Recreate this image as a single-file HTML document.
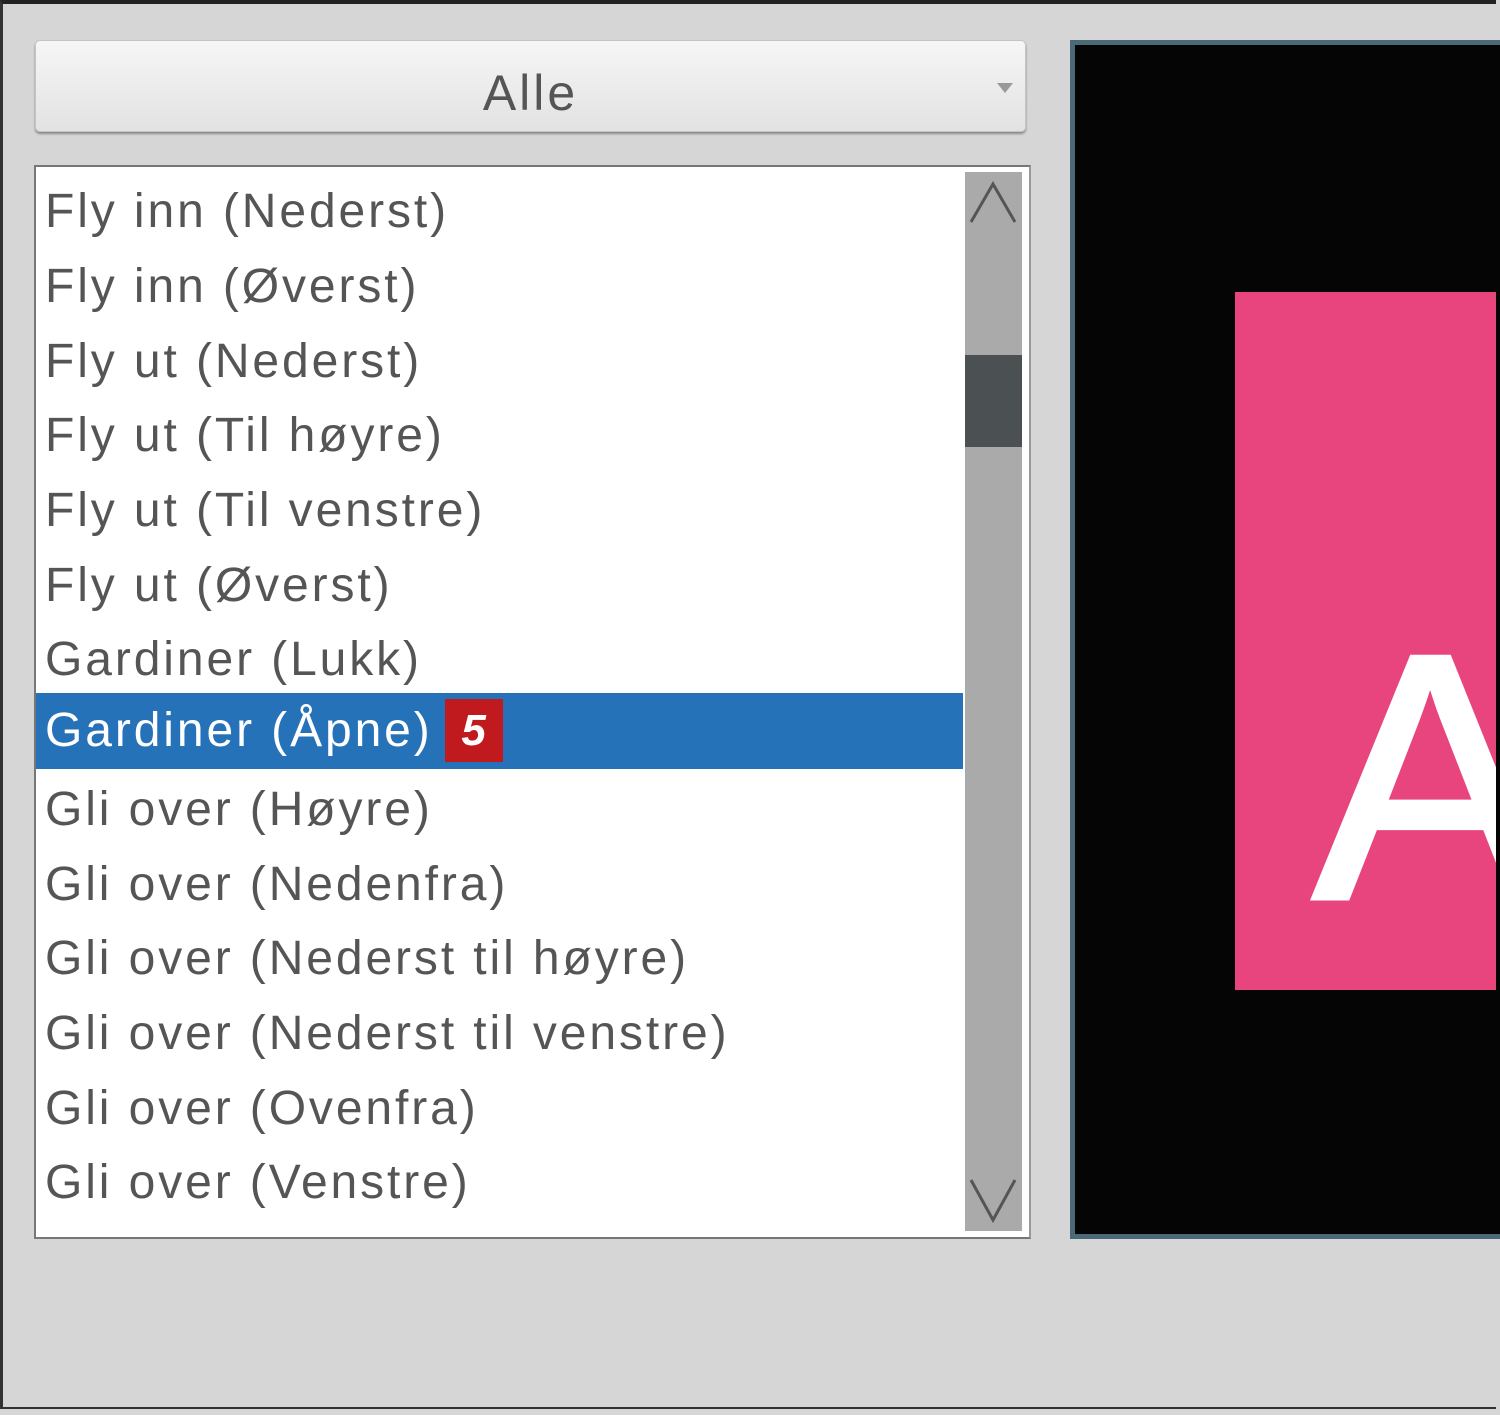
<!DOCTYPE html>
<html><head><meta charset="utf-8"><style>
html,body{margin:0;padding:0}
body{width:1500px;height:1415px;position:relative;overflow:hidden;background:#d6d6d6;font-family:"Liberation Sans",sans-serif}
.frame{position:absolute;left:0;top:0;width:1496px;height:1409px;border-top:4px solid #222;border-left:3px solid #333;border-bottom:2px solid #333;box-sizing:border-box}
.combo{position:absolute;left:35px;top:40px;width:991px;height:92px;border-radius:5px;background:linear-gradient(#f6f6f6,#e2e2e2);box-shadow:0 2px 2px #888;border:1px solid #c4c4c4;box-sizing:border-box;text-align:center;font-size:50px;line-height:104px;color:#555;letter-spacing:3px}
.arrow{position:absolute;right:12px;top:42px;width:0;height:0;border-left:8px solid transparent;border-right:8px solid transparent;border-top:10px solid #999}
.list{position:absolute;left:34px;top:165px;width:997px;height:1074px;background:#fff;border:2px solid #777;border-right-color:#999;box-sizing:border-box;overflow:hidden}
.item{position:absolute;left:0;width:927px;height:75px;line-height:75px;font-size:48px;letter-spacing:2.9px;color:#555;padding-left:9px;box-sizing:border-box;white-space:nowrap}
.sel{background:#2672b8;color:#fff}
.badge{display:inline-block;background:#c0191e;color:#fff;font-weight:bold;font-style:italic;width:58px;height:63px;line-height:63px;text-align:center;vertical-align:middle;margin-left:12px;font-size:44px;letter-spacing:0;position:relative;top:-3px}
.sb{position:absolute;left:929px;top:5px;width:57px;height:1059px;background:#aaaaaa}
.thumb{position:absolute;left:0;top:183px;width:57px;height:92px;background:#4b5052}
.prev{position:absolute;left:1070px;top:40px;width:440px;height:1199px;background:#050505;border:5px solid #4a6a78;box-sizing:border-box;overflow:hidden}
.pink{position:absolute;left:160px;top:247px;width:261px;height:698px;background:#e8457f;overflow:hidden}
.bigA{position:absolute;left:78px;top:311px;font-size:350px;line-height:350px;color:#fff;-webkit-text-stroke:5px #fff}
</style></head><body>
<div class="frame"></div>
<div class="combo">Alle<div class="arrow"></div></div>
<div class="list">
<div class="item" style="top:7px">Fly inn (Nederst)</div>
<div class="item" style="top:82px">Fly inn (Øverst)</div>
<div class="item" style="top:157px">Fly ut (Nederst)</div>
<div class="item" style="top:231px">Fly ut (Til høyre)</div>
<div class="item" style="top:306px">Fly ut (Til venstre)</div>
<div class="item" style="top:381px">Fly ut (Øverst)</div>
<div class="item" style="top:455px">Gardiner (Lukk)</div>
<div class="item sel" style="top:526px;height:76px">Gardiner (Åpne)<span class="badge">5</span></div>
<div class="item" style="top:605px">Gli over (Høyre)</div>
<div class="item" style="top:680px">Gli over (Nedenfra)</div>
<div class="item" style="top:754px">Gli over (Nederst til høyre)</div>
<div class="item" style="top:829px">Gli over (Nederst til venstre)</div>
<div class="item" style="top:904px">Gli over (Ovenfra)</div>
<div class="item" style="top:978px">Gli over (Venstre)</div>
<div class="sb"><div class="thumb"></div>
<svg width="57" height="1059" style="position:absolute;left:0;top:0"><path d="M6 50 L28 12 L50 50" fill="none" stroke="#555" stroke-width="3"/><path d="M6 1008 L28 1048 L50 1008" fill="none" stroke="#555" stroke-width="3"/></svg>
</div>
</div>
<div class="prev"><div class="pink"><div class="bigA">A</div></div></div>
</body></html>
